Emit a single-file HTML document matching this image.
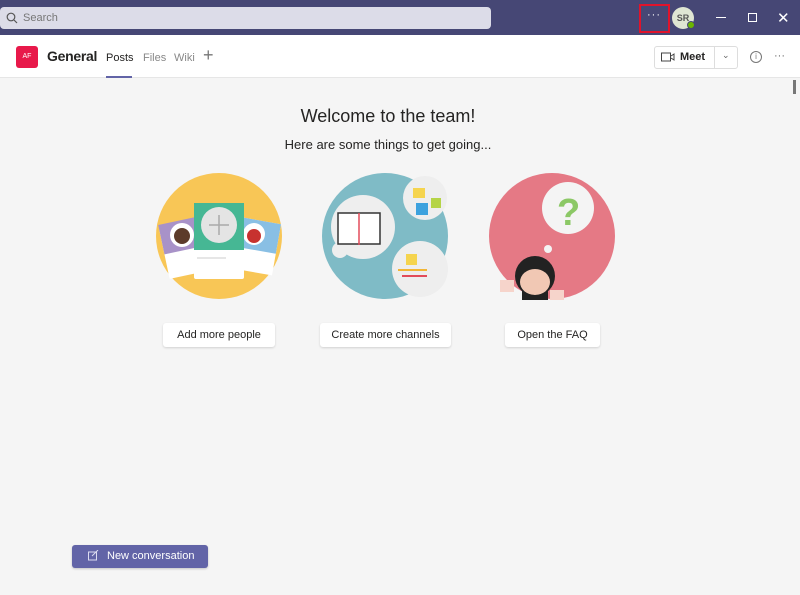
<!DOCTYPE html>
<html><head><style>
*{margin:0;padding:0;box-sizing:border-box}
body{width:800px;height:595px;overflow:hidden;background:#f5f5f5;font-family:"Liberation Sans",sans-serif;position:relative}
.abs{position:absolute}
.btn{position:absolute;background:#fff;border-radius:3px;box-shadow:0 1px 2px rgba(0,0,0,.15);font-size:11px;color:#252423;text-align:center;line-height:24px;height:24px;top:323px}
</style></head><body>
<div class="abs" style="left:0;top:0;width:800px;height:35px;background:#464775"></div>
<div class="abs" style="left:0;top:7px;width:491px;height:22px;background:#dcdce8;border-radius:4px"></div>
<svg class="abs" style="left:6px;top:12px" width="12" height="12"><circle cx="5" cy="5" r="3.8" fill="none" stroke="#555" stroke-width="1.2"/><line x1="8" y1="8" x2="11" y2="11" stroke="#555" stroke-width="1.2"/></svg>
<div class="abs" style="left:23px;top:12px;font-size:11px;color:#777">Search</div>
<div class="abs" style="left:639px;top:4px;width:31px;height:29px;border:2px solid #e0132b"></div>
<div class="abs" style="left:647px;top:9px;color:#fff;font-size:11px;letter-spacing:1px">···</div>
<div class="abs" style="left:672px;top:7px;width:22px;height:22px;border-radius:50%;background:#dfe6d3;font-size:9px;color:#555;text-align:center;line-height:22px;font-weight:bold">SR</div>
<div class="abs" style="left:687px;top:21px;width:8px;height:8px;border-radius:50%;background:#6bb700;border:1px solid #464775"></div>
<div class="abs" style="left:716px;top:17px;width:10px;height:1px;background:#fff"></div>
<div class="abs" style="left:748px;top:13px;width:9px;height:9px;border:1px solid #fff"></div>
<div class="abs" style="left:777px;top:9px;color:#fff;font-size:15px">✕</div>
<div class="abs" style="left:0;top:35px;width:800px;height:43px;background:#fff;border-bottom:1px solid #e6e6e6"></div>
<div class="abs" style="left:16px;top:46px;width:22px;height:22px;background:#e8194a;border-radius:3px;color:#fff;font-size:7px;text-align:center;line-height:22px">AF</div>
<div class="abs" style="left:47px;top:48px;font-size:14px;font-weight:bold;color:#252423;letter-spacing:-0.3px">General</div>
<div class="abs" style="left:106px;top:52px;font-size:11px;color:#252423">Posts</div>
<div class="abs" style="left:106px;top:76px;width:26px;height:2px;background:#6264a7"></div>
<div class="abs" style="left:143px;top:52px;font-size:11px;color:#888">Files</div>
<div class="abs" style="left:174px;top:52px;font-size:11px;color:#888">Wiki</div>
<div class="abs" style="left:203px;top:45px;font-size:18px;color:#777">+</div>
<div class="abs" style="left:654px;top:46px;width:84px;height:23px;background:#fff;border:1px solid #ddd;border-radius:3px"></div>
<div class="abs" style="left:714px;top:46px;width:1px;height:23px;background:#ddd"></div>
<svg class="abs" style="left:661px;top:52px" width="14" height="10"><rect x="0.5" y="1" width="9" height="8" fill="none" stroke="#444"/><path d="M10 4L13 2V8L10 6" fill="none" stroke="#444"/></svg>
<div class="abs" style="left:680px;top:51px;font-size:11px;font-weight:bold;color:#252423">Meet</div>
<div class="abs" style="left:722px;top:50px;font-size:9px;color:#666">⌄</div>
<div class="abs" style="left:750px;top:51px;width:12px;height:12px;border:1px solid #777;border-radius:50%;font-size:8px;text-align:center;line-height:10px;color:#777">i</div>
<div class="abs" style="left:774px;top:50px;color:#666;font-size:11px">···</div>
<div class="abs" style="left:793px;top:80px;width:3px;height:14px;background:#777"></div>
<div class="abs" style="left:0;top:106px;width:776px;text-align:center;font-size:18px;color:#252423">Welcome to the team!</div>
<div class="abs" style="left:0;top:137px;width:776px;text-align:center;font-size:13px;color:#252423">Here are some things to get going...</div>
<svg class="abs" style="left:150px;top:170px" width="480" height="140">
<circle cx="69" cy="66" r="63" fill="#f8c656"/>
<rect x="14" y="55" width="42" height="50" fill="#fff" transform="rotate(-12 35 80)"/><rect x="14" y="50" width="42" height="30" fill="#a892c8" transform="rotate(-12 35 80)"/>
<rect x="85" y="50" width="42" height="52" fill="#fff" transform="rotate(10 105 75)"/><rect x="85" y="50" width="42" height="30" fill="#89bfe4" transform="rotate(10 105 75)"/>
<circle cx="32" cy="65" r="12" fill="#fff"/><circle cx="32" cy="66" r="8" fill="#5c3b2a"/>
<circle cx="104" cy="64" r="11" fill="#fff"/><circle cx="104" cy="66" r="7" fill="#c7322f"/>
<rect x="44" y="33" width="50" height="76" fill="#fff" rx="2"/><rect x="44" y="33" width="50" height="47" fill="#46b794"/>
<circle cx="69" cy="55" r="18" fill="#e4e4e4"/><path d="M69 45v20M59 55h20" stroke="#aaa" stroke-width="1.5"/>
<line x1="47" y1="88" x2="76" y2="88" stroke="#ccc"/>
<circle cx="235" cy="66" r="63" fill="#7fbbc6"/>
<circle cx="213" cy="57" r="32" fill="#eee"/><circle cx="190" cy="80" r="8" fill="#eee"/>
<rect x="188" y="43" width="42" height="31" fill="#fff" stroke="#333" stroke-width="1.5"/><line x1="209" y1="43" x2="209" y2="75" stroke="#e24c5a" stroke-width="1.5"/>
<circle cx="275" cy="28" r="22" fill="#eee"/><rect x="263" y="18" width="12" height="10" fill="#f5d44e"/><rect x="266" y="33" width="12" height="12" fill="#3da2de"/><rect x="281" y="28" width="10" height="10" fill="#b5d447"/>
<circle cx="270" cy="99" r="28" fill="#eee"/><rect x="256" y="84" width="11" height="11" fill="#f5d44e"/><line x1="248" y1="100" x2="277" y2="100" stroke="#f2b635" stroke-width="2"/><line x1="252" y1="106" x2="277" y2="106" stroke="#e24c5a" stroke-width="2"/>
<circle cx="402" cy="66" r="63" fill="#e57985"/>
<circle cx="418" cy="38" r="26" fill="#f4f4f4"/><circle cx="398" cy="79" r="4" fill="#f4f4f4"/>
<text x="407" y="55" font-size="38" font-weight="bold" fill="#8cc866" font-family="Liberation Sans">?</text>
<circle cx="385" cy="106" r="20" fill="#222"/><ellipse cx="385" cy="112" rx="15" ry="13" fill="#f1c8b4"/><path d="M372 120q13 10 26 0v10h-26z" fill="#222"/>
<rect x="350" y="110" width="14" height="12" fill="#f6d4cb"/><rect x="400" y="120" width="14" height="10" fill="#f6d4cb"/>
</svg>
<div class="btn" style="left:163px;width:112px">Add more people</div>
<div class="btn" style="left:320px;width:131px">Create more channels</div>
<div class="btn" style="left:505px;width:95px">Open the FAQ</div>
<div class="abs" style="left:72px;top:545px;width:136px;height:23px;background:#6264a7;border-radius:3px;box-shadow:0 1px 2px rgba(0,0,0,.2)"></div>
<svg class="abs" style="left:88px;top:550px" width="11" height="11"><rect x="0.5" y="2" width="8" height="8" fill="none" stroke="#dcdcf0"/><path d="M4 6L10 0" stroke="#dcdcf0"/></svg>
<div class="abs" style="left:107px;top:550px;font-size:11px;color:#fff">New conversation</div>
</body></html>
